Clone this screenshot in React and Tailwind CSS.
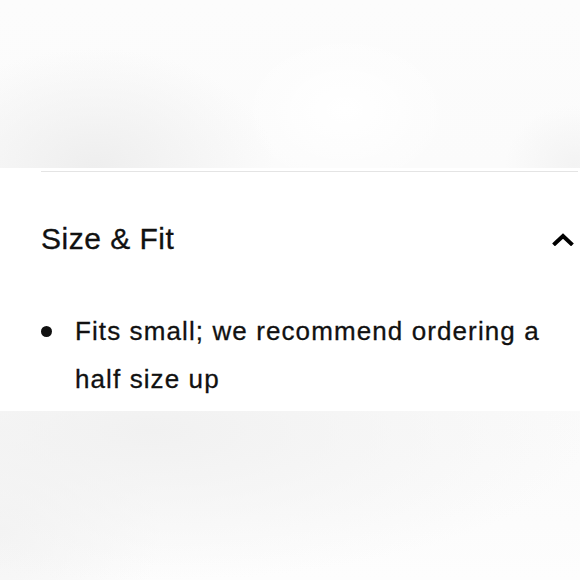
import { useState } from 'react';

const Chevron = ({ open }) => (
  <svg
    width="22"
    height="14"
    viewBox="0 0 22 14"
    className={open ? '' : 'rotate-180'}
  >
    <polyline
      points="3,11.5 11,4 19,11.5"
      fill="none"
      stroke="#000"
      strokeWidth="4"
      strokeLinecap="square"
    />
  </svg>
);

const SizeFit = () => {
  const [open, setOpen] = useState(true);

  return (
    <section className="h-[243px] bg-white pl-[41px] pt-[3px] font-['Liberation_Sans',Arial,sans-serif] text-[#111] [-webkit-text-stroke:0.3px_#111]">
      <div className="mr-[2px] border-t border-[#e4e4e4]" />
      <button
        onClick={() => setOpen(!open)}
        className="mt-[49px] flex h-[36px] w-full items-center justify-between pr-[6px] text-left"
      >
        <h2 className="text-[30px] leading-[36px] tracking-[0.5px]">Size &amp; Fit</h2>
        <Chevron open={open} />
      </button>
      {open && (
        <ul className="mt-[50px]">
          <li className="flex items-start">
            <span className="mt-[19px] h-[11px] w-[11px] shrink-0 rounded-full bg-[#111]" />
            <p className="ml-[23px] max-w-[480px] text-[26px] leading-[48px] tracking-[1.1px]">
              Fits small; we recommend ordering a half size up
            </p>
          </li>
        </ul>
      )}
    </section>
  );
};

export default function App() {
  return (
    <div className="flex h-[580px] w-[580px] flex-col overflow-hidden bg-white">
      <div className="h-[168px] bg-[radial-gradient(ellipse_180px_120px_at_95px_168px,#eeeeee,rgba(252,252,252,0)),radial-gradient(ellipse_110px_80px_at_345px_110px,#ffffff,rgba(255,255,255,0)),radial-gradient(ellipse_70px_60px_at_575px_165px,#f3f3f3,rgba(252,252,252,0)),linear-gradient(#fcfcfc,#fbfbfb)]" />
      <SizeFit />
      <div className="flex-1 bg-[radial-gradient(ellipse_440px_150px_at_150px_20px,#f1f1f1,rgba(253,253,253,0)),radial-gradient(ellipse_160px_140px_at_0px_120px,#f4f4f4,rgba(253,253,253,0)),linear-gradient(#fafafa,#fdfdfd)]" />
    </div>
  );
}
